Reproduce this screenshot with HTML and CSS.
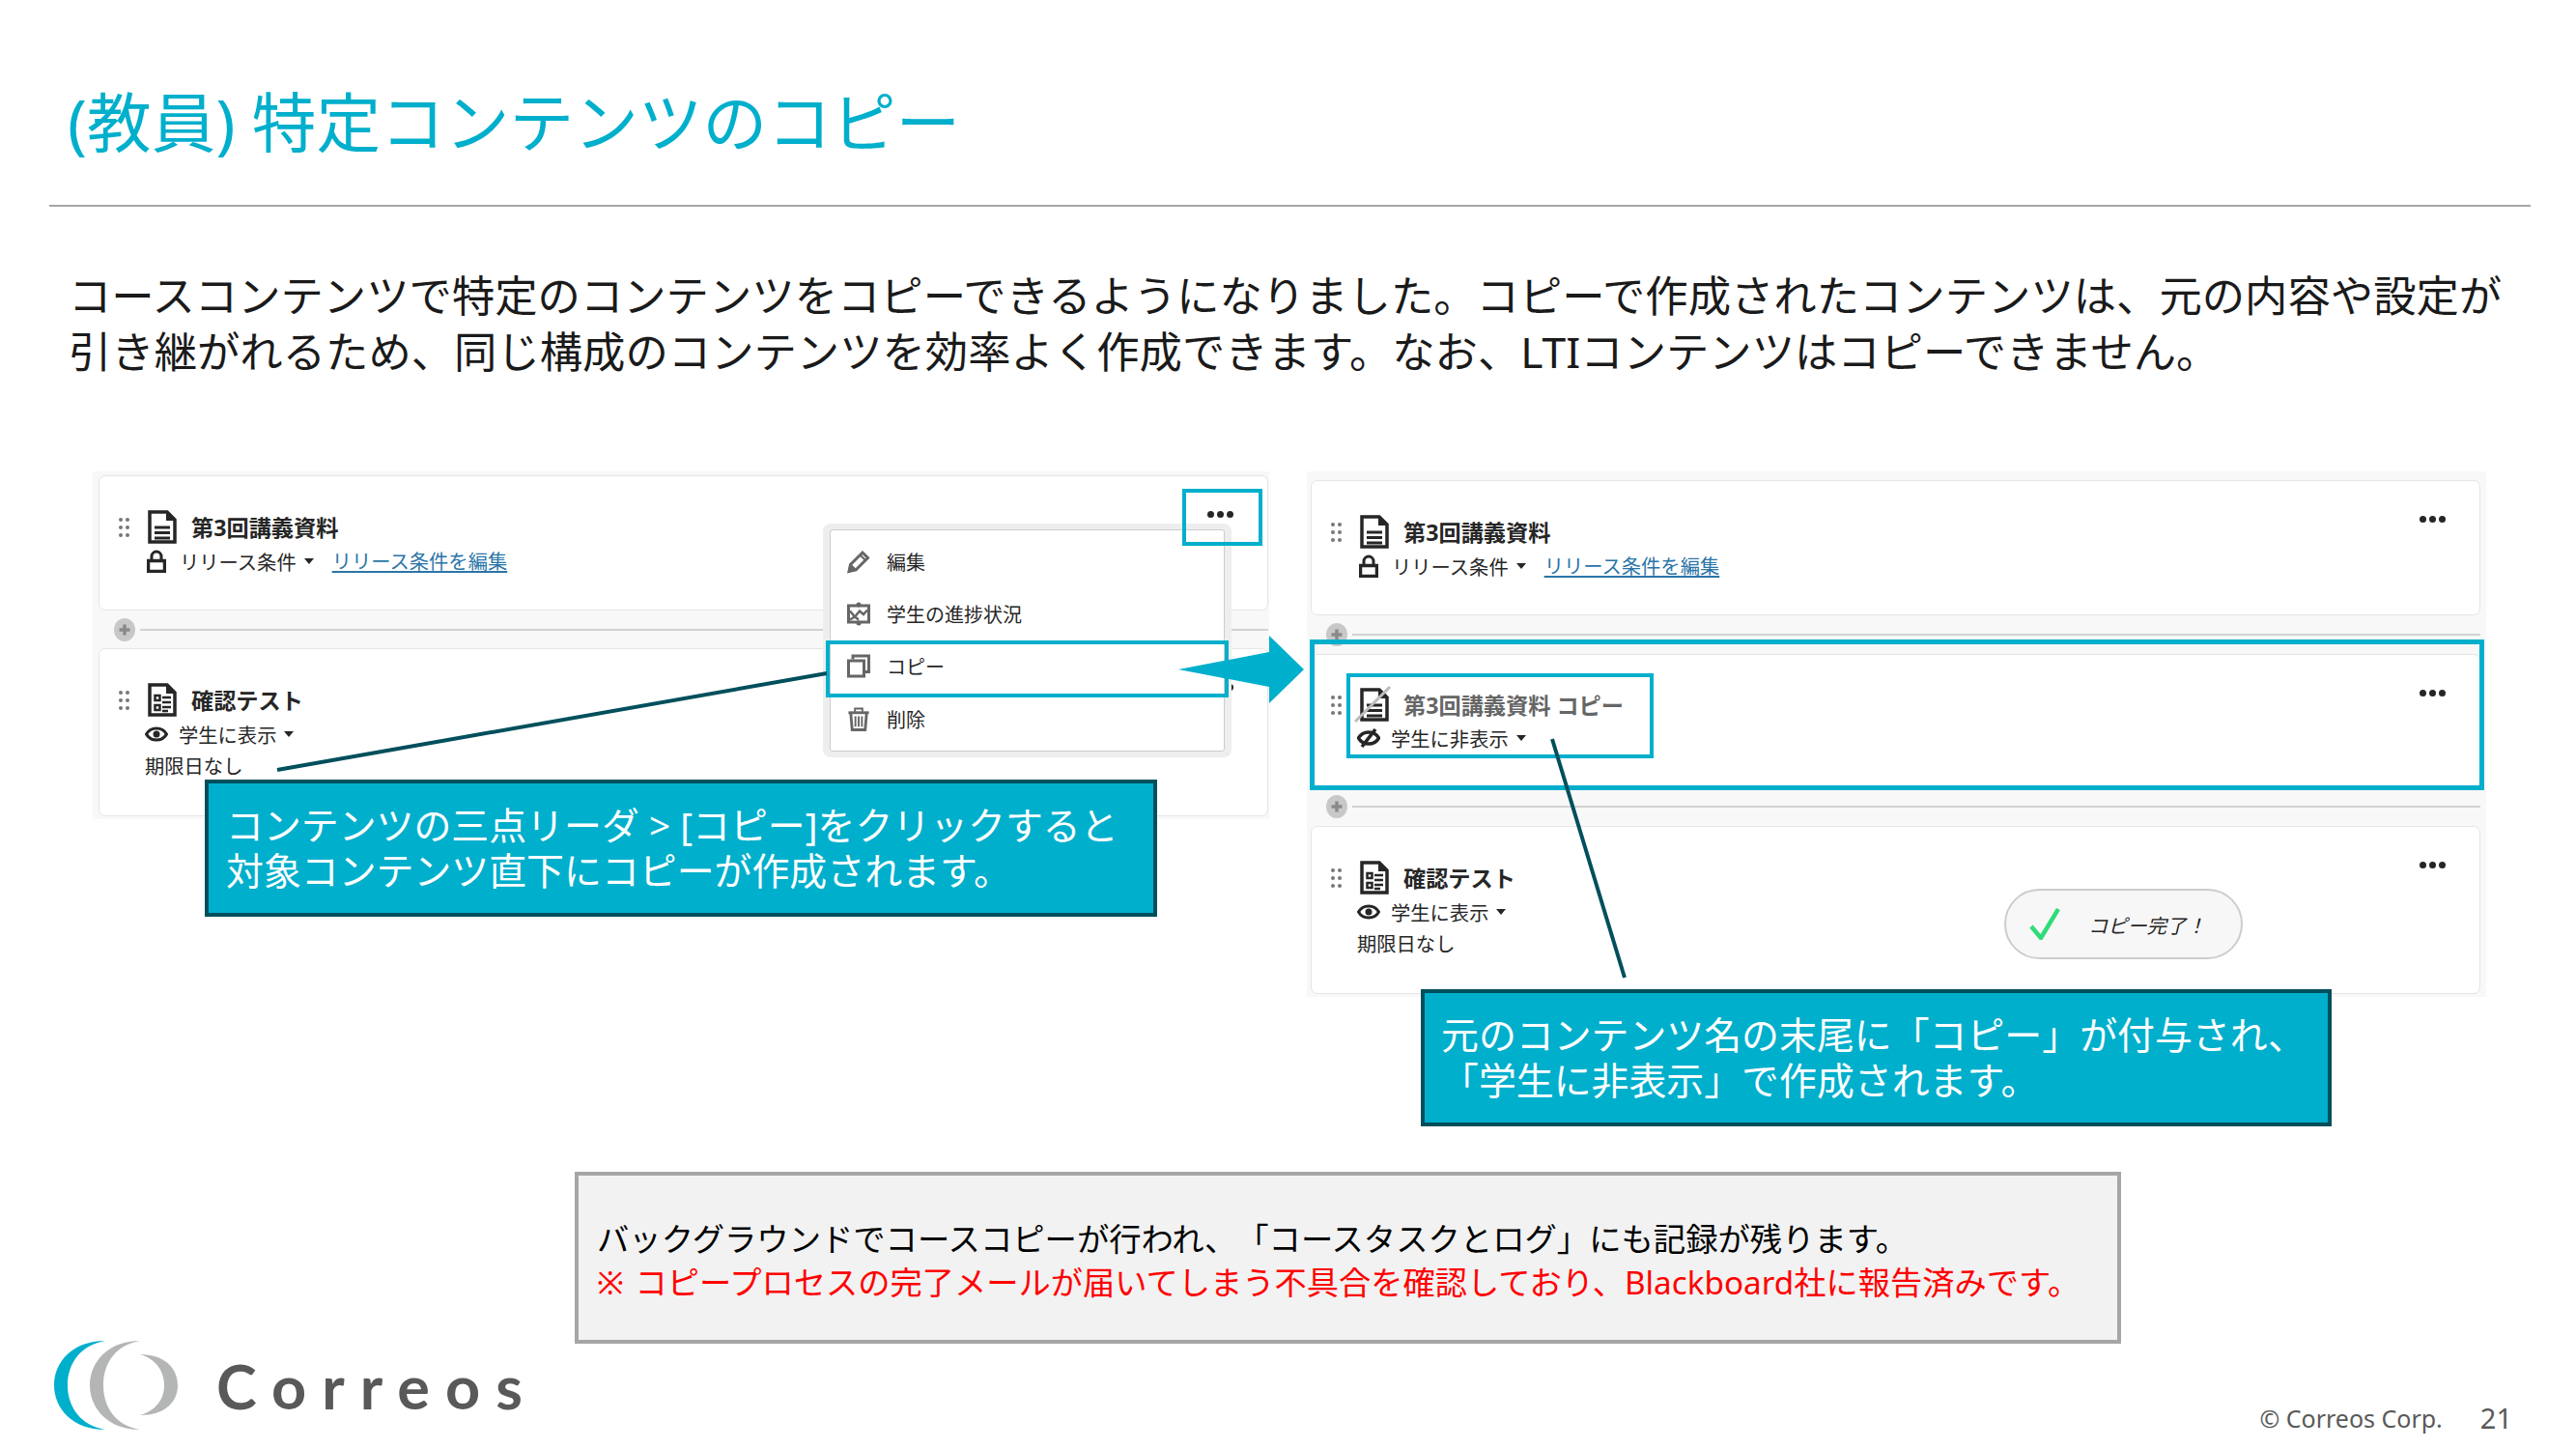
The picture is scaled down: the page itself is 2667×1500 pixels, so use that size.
FILE: index.html
```html
<!DOCTYPE html>
<html lang="ja">
<head>
    <meta charset="UTF-8">
    <title>(教員) 特定コンテンツのコピー</title>
    <link rel="stylesheet" href="styles.css">
</head>
<body>
<svg class="sprite" width="0" height="0">
    <symbol id="i-doc" viewBox="0 0 30 35">
        <path d="M2 2H20L28 10V33H2Z" fill="none" stroke="currentColor" stroke-width="3.500"/>
        <path d="M19 2L28 11H19Z" fill="currentColor"/>
        <path d="M7 18H23M7 23.500H23M7 29H23" stroke="currentColor" stroke-width="3"/>
    </symbol>
    <symbol id="i-test" viewBox="0 0 30 35">
        <path d="M2 2H20L28 10V33H2Z" fill="none" stroke="currentColor" stroke-width="3.500"/>
        <path d="M19 2L28 11H19Z" fill="currentColor"/>
        <path d="M7.500 13h5v5h-5zM7.500 23h5v5h-5z" fill="none" stroke="currentColor" stroke-width="2.500"/>
        <path d="M15 15H24M15 20H24M15 25H24M15 29H21" stroke="currentColor" stroke-width="2.500"/>
    </symbol>
    <symbol id="i-lock" viewBox="0 0 20 24">
        <path d="M1.500 11.500H18.500V22.500H1.500Z" fill="none" stroke="currentColor" stroke-width="3.500"/>
        <path d="M5 11V7A5 5 0 0 1 15 7V11" fill="none" stroke="currentColor" stroke-width="3"/>
    </symbol>
    <symbol id="i-eye" viewBox="0 0 24 20">
        <path d="M1.500 10C6 2 18 2 22.500 10C18 18 6 18 1.500 10Z" fill="none" stroke="currentColor" stroke-width="3"/>
        <circle cx="12" cy="10" r="3.500" fill="currentColor"/>
    </symbol>
    <symbol id="i-eye-off" viewBox="0 0 24 20">
        <path d="M1.500 10C6 2 18 2 22.500 10C18 18 6 18 1.500 10Z" fill="none" stroke="currentColor" stroke-width="3.500"/>
        <path d="M5 19L19 1" stroke="currentColor" stroke-width="3.500"/>
    </symbol>
    <symbol id="i-pencil" viewBox="0 0 24 24">
        <path d="M2 22L3.500 15L16 2.500L21.500 8L9 20.500Z" fill="none" stroke="currentColor" stroke-width="3"/>
        <path d="M13.500 5L19 10.500M2 22L3.500 15L9 20.500Z" fill="currentColor" stroke="currentColor" stroke-width="2"/>
    </symbol>
    <symbol id="i-progress" viewBox="0 0 24 24">
        <path d="M1.500 3.500H22.500V20.500H1.500Z" fill="none" stroke="currentColor" stroke-width="3"/>
        <path d="M3 9L8 15L13 9L17 12.500L21 8M3 18L8 15L12 18" fill="none" stroke="currentColor" stroke-width="2.500"/>
        <circle cx="12" cy="2.500" r="2.500" fill="currentColor"/>
        <circle cx="12" cy="21.500" r="2.500" fill="currentColor"/>
    </symbol>
    <symbol id="i-copy" viewBox="0 0 24 24">
        <path d="M6 5V1.500H22.500V18H18" fill="none" stroke="currentColor" stroke-width="3"/>
        <path d="M1.500 6.500H17.500V22.500H1.500Z" fill="none" stroke="currentColor" stroke-width="3"/>
    </symbol>
    <symbol id="i-trash" viewBox="0 0 24 26">
        <path d="M1 6H23" stroke="currentColor" stroke-width="3"/>
        <path d="M8 5V1.500H16V5" fill="none" stroke="currentColor" stroke-width="2"/>
        <path d="M3.500 7L5 24.500H19L20.500 7" fill="none" stroke="currentColor" stroke-width="3"/>
        <path d="M8.500 10V21M12 10V21M15.500 10V21" stroke="currentColor" stroke-width="2"/>
    </symbol>
    <symbol id="i-plus" viewBox="0 0 22 24">
        <ellipse cx="11" cy="12" rx="11" ry="12" fill="#c8c8c8"/>
        <path d="M11 6.500V17.500M5.500 12H16.500" stroke="#8a8a8a" stroke-width="3.500"/>
    </symbol>
</svg>

<div class="slide">
    <h1 class="slide-title">(教員) 特定コンテンツのコピー</h1>
    <hr class="slide-rule">
    <p class="lead">コースコンテンツで特定のコンテンツをコピーできるようになりました。コピーで作成されたコンテンツは、元の内容や設定が<br>引き継がれるため、同じ構成のコンテンツを効率よく作成できます。なお、LTIコンテンツはコピーできません。</p>

    <div class="figures">
        <!-- 左: コピー前 -->
        <div class="panel panel-before">
            <div class="card card-short">
                <div class="card-head">
                    <span class="grip"><i></i><i></i><i></i><i></i><i></i><i></i></span>
                    <svg class="doc-icon"><use href="#i-doc"/></svg>
                    <span class="card-title">第3回講義資料</span>
                </div>
                <div class="card-meta">
                    <svg class="lock-icon"><use href="#i-lock"/></svg>
                    <span class="meta-text">リリース条件</span><span class="caret"></span>
                    <a class="meta-link" href="#">リリース条件を編集</a>
                </div>
                <span class="kebab"><i></i><i></i><i></i></span>
            </div>
            <div class="sep"><svg class="plus-icon"><use href="#i-plus"/></svg><span class="sep-line"></span></div>
            <div class="card card-tall">
                <div class="card-head">
                    <span class="grip"><i></i><i></i><i></i><i></i><i></i><i></i></span>
                    <svg class="doc-icon"><use href="#i-test"/></svg>
                    <span class="card-title">確認テスト</span>
                </div>
                <div class="card-meta">
                    <svg class="eye-icon"><use href="#i-eye"/></svg>
                    <span class="meta-text">学生に表示</span><span class="caret"></span>
                </div>
                <div class="card-date">期限日なし</div>
                <span class="kebab"><i></i><i></i><i></i></span>
            </div>
        </div>

        <!-- 右: コピー後 -->
        <div class="panel panel-after">
            <div class="card card-short">
                <div class="card-head">
                    <span class="grip"><i></i><i></i><i></i><i></i><i></i><i></i></span>
                    <svg class="doc-icon"><use href="#i-doc"/></svg>
                    <span class="card-title">第3回講義資料</span>
                </div>
                <div class="card-meta">
                    <svg class="lock-icon"><use href="#i-lock"/></svg>
                    <span class="meta-text">リリース条件</span><span class="caret"></span>
                    <a class="meta-link" href="#">リリース条件を編集</a>
                </div>
                <span class="kebab"><i></i><i></i><i></i></span>
            </div>
            <div class="sep sep-after"><svg class="plus-icon"><use href="#i-plus"/></svg><span class="sep-line"></span></div>
            <div class="card card-copy">
                <div class="card-head">
                    <span class="grip"><i></i><i></i><i></i><i></i><i></i><i></i></span>
                    <svg class="doc-icon doc-hidden"><use href="#i-doc"/><path d="M-5 35L31 -1" stroke="#bbb" stroke-width="3"/></svg>
                    <span class="card-title title-hidden">第3回講義資料 コピー</span>
                </div>
                <div class="card-meta">
                    <svg class="eye-icon"><use href="#i-eye-off"/></svg>
                    <span class="meta-text">学生に非表示</span><span class="caret"></span>
                </div>
                <span class="kebab"><i></i><i></i><i></i></span>
            </div>
            <div class="sep sep-after"><svg class="plus-icon"><use href="#i-plus"/></svg><span class="sep-line"></span></div>
            <div class="card card-tall">
                <div class="card-head">
                    <span class="grip"><i></i><i></i><i></i><i></i><i></i><i></i></span>
                    <svg class="doc-icon"><use href="#i-test"/></svg>
                    <span class="card-title">確認テスト</span>
                </div>
                <div class="card-meta">
                    <svg class="eye-icon"><use href="#i-eye"/></svg>
                    <span class="meta-text">学生に表示</span><span class="caret"></span>
                </div>
                <div class="card-date">期限日なし</div>
                <span class="kebab"><i></i><i></i><i></i></span>
                <div class="toast">
                    <svg class="toast-check" viewBox="0 0 32 33"><path d="M2 19L12 31L30 1" fill="none" stroke="#2fdc78" stroke-width="4.500"/></svg>
                    <span class="toast-text">コピー完了！</span>
                </div>
            </div>
        </div>
    </div>

    <!-- スライド上の注釈 -->
    <div class="menu">
        <div class="menu-inner">
            <div class="menu-item"><svg class="menu-icon"><use href="#i-pencil"/></svg>編集</div>
            <div class="menu-item"><svg class="menu-icon"><use href="#i-progress"/></svg>学生の進捗状況</div>
            <div class="menu-item"><svg class="menu-icon"><use href="#i-copy"/></svg>コピー</div>
            <div class="menu-item"><svg class="menu-icon"><use href="#i-trash"/></svg>削除</div>
        </div>
    </div>
    <div class="mark mark-kebab"></div>
    <div class="mark mark-copy"></div>
    <div class="mark mark-card"></div>
    <div class="mark mark-name"></div>
    <svg class="overlay" viewBox="0 0 2667 1500">
        <path d="M287 797L856 697M1607 765L1682 1012" stroke="#004f5c" stroke-width="4"/>
        <path d="M1220 693L1314 675V658L1350 693L1314 728V711Z" fill="#00afcc"/>
    </svg>
    <div class="callout callout-menu">コンテンツの三点リーダ &gt; [コピー]をクリックすると<br>対象コンテンツ直下にコピーが作成されます。</div>
    <div class="callout callout-name">元のコンテンツ名の末尾に「コピー」が付与され、<br>「学生に非表示」で作成されます。</div>

    <div class="note">
        <p>バックグラウンドでコースコピーが行われ、「コースタスクとログ」にも記録が残ります。</p>
        <p class="note-warn">※ コピープロセスの完了メールが届いてしまう不具合を確認しており、Blackboard社に報告済みです。</p>
    </div>

    <div class="footer">
        <svg class="logo-mark" viewBox="0 0 140 92">
            <path d="M59 0C25 0 6 22 6 46C6 70 25 92 59 92C35 88 20 70 20 46C20 22 35 4 59 0Z" fill="#00afcc"/>
            <path d="M95 0C62 0 43 22 43 46C43 70 62 92 95 92C71 88 57 70 57 46C57 22 71 4 95 0Z" fill="#b4b6b5"/>
            <path d="M95 14C120 14 134 28 134 46C134 64 120 77 95 77C112 72 120 60 120 46C120 32 112 19 95 14Z" fill="#b4b6b5"/>
        </svg>
        <span class="logo-text">Correos</span>
        <span class="copyright">© Correos Corp.</span>
        <span class="page-no">21</span>
    </div>
</div>
</body>
</html>
```

FILE: styles.css
```css
* {
    box-sizing: border-box;
}
body {
    margin: 0;
    background: #fff;
    font-family: "Noto Sans", "Noto Sans CJK JP", sans-serif;
    text-spacing-trim: space-all;
}
.sprite {
    position: absolute;
}
.slide {
    position: relative;
    width: 2667px;
    height: 1500px;
    overflow: hidden;
}
.slide-title {
    margin: 0;
    padding: 87px 0 45px 70px;
    font-size: 66.7px;
    line-height: 80px;
    font-weight: 400;
    color: #00afcc;
}
.slide-rule {
    height: 2px;
    margin: 0 47px 0 51px;
    border: 0;
    background: #a6a6a6;
}
.lead {
    margin: 63px 0 0 71px;
    font-size: 44.35px;
    line-height: 58px;
    white-space: nowrap;
    color: #1a1a1a;
}

/* screenshots */
.figures {
    display: flex;
    gap: 39px;
    margin: 95px 0 0 96px;
}
.panel {
    background: #f8f8f8;
    color: #262626;
}
.panel-before {
    width: 1218px;
    height: 360px;
    padding: 4px 1px 3px 6px;
}
.panel-after {
    width: 1221px;
    height: 544px;
    padding: 9px 6px 3px 4px;
}
.card {
    position: relative;
    padding: 35px 0 0 20px;
    background: #fff;
    border: 1px solid #e5e5e5;
    border-radius: 7px;
}
.card-short {
    height: 140px;
}
.card-copy {
    height: 138px;
    padding-top: 34px;
}
.card-copy .card-meta {
    margin-top: 5px;
}
.card-tall {
    height: 174px;
}
.card-head {
    display: flex;
    align-items: center;
    height: 35px;
}
.grip {
    display: grid;
    grid-template-columns: 4px 4px;
    gap: 4px 3px;
    width: 11px;
    margin-right: 19px;
}
.grip i {
    width: 4px;
    height: 4px;
    border-radius: 50%;
    background: #777;
}
.doc-icon {
    width: 30px;
    height: 35px;
    margin-right: 15px;
    overflow: visible;
}
.card-title {
    padding-bottom: 2px;
    font-size: 23.2px;
    font-weight: 700;
    white-space: nowrap;
}
.title-hidden {
    color: #666;
}
.card-meta {
    display: flex;
    align-items: center;
    height: 24px;
    margin: 6px 0 0 28px;
    font-size: 20.3px;
    white-space: nowrap;
}
.lock-icon {
    width: 20px;
    height: 24px;
    margin: 0 14px 0 1px;
}
.eye-icon {
    width: 24px;
    height: 20px;
    margin: 0 11px 0 -1px;
}
.caret {
    width: 0;
    height: 0;
    margin-left: 8px;
    border: 5px solid transparent;
    border-top: 6px solid #262626;
    border-bottom: 0;
}
.meta-link {
    margin-left: 19px;
    color: #2a75a8;
    line-height: 22px;
    text-decoration: underline;
}
.card-date {
    margin: 9px 0 0 27px;
    font-size: 20.3px;
    line-height: 24px;
}
.kebab {
    position: absolute;
    top: 36px;
    right: 35px;
    display: flex;
    gap: 3px;
}
.kebab i {
    width: 7px;
    height: 7px;
    border-radius: 50%;
    background: #262626;
}
.sep {
    display: flex;
    align-items: center;
    height: 39px;
    padding-left: 16px;
}
.sep-after {
    height: 40px;
    padding-left: 16px;
}
.plus-icon {
    flex: none;
    width: 22px;
    height: 24px;
}
.sep-line {
    flex: 1;
    height: 2px;
    margin-left: 5px;
    background: #d2d2d2;
}
.toast {
    position: absolute;
    top: 64px;
    left: 717px;
    display: flex;
    align-items: center;
    width: 247px;
    height: 73px;
    padding-left: 24px;
    background: #f7f7f7;
    border: 2px solid #cdcdcd;
    border-radius: 37px;
}
.toast-check {
    width: 32px;
    height: 33px;
    margin-right: 29px;
}
.toast-text {
    font-size: 20.3px;
    font-style: italic;
}

/* things laid over the screenshots */
.menu {
    position: absolute;
    top: 542px;
    left: 852px;
    width: 423px;
    height: 242px;
    padding: 6px 7px;
    background: #eee;
    border-radius: 8px;
}
.menu-inner {
    height: 100%;
    padding-top: 5px;
    background: #fff;
    border: 1px solid #ccc;
    border-radius: 3px;
}
.menu-item {
    display: flex;
    align-items: center;
    height: 54.4px;
    padding-left: 17px;
    font-size: 20px;
    color: #262626;
}
.menu-icon {
    width: 24px;
    height: 25px;
    margin-right: 17px;
    color: #666;
}
.mark {
    position: absolute;
    border: 4px solid #00afcc;
}
.mark-kebab {
    top: 506px;
    left: 1224px;
    width: 83px;
    height: 59px;
}
.mark-copy {
    top: 663px;
    left: 855px;
    width: 417px;
    height: 59px;
}
.mark-card {
    top: 662px;
    left: 1356px;
    width: 1216px;
    height: 156px;
    border-width: 5px;
}
.mark-name {
    top: 697px;
    left: 1394px;
    width: 318px;
    height: 88px;
}
.overlay {
    position: absolute;
    top: 0;
    left: 0;
    width: 2667px;
    height: 1500px;
}
.callout {
    position: absolute;
    display: flex;
    align-items: center;
    height: 142px;
    padding-bottom: 2px;
    background: #00afcc;
    border: 4px solid #004f5c;
    font-size: 38.9px;
    line-height: 47px;
    color: #fff;
    white-space: nowrap;
}
.callout-menu {
    top: 807px;
    left: 212px;
    width: 986px;
    padding-left: 18px;
}
.callout-name {
    top: 1024px;
    left: 1471px;
    width: 943px;
    padding-left: 17px;
}

.note {
    display: flex;
    flex-direction: column;
    justify-content: center;
    width: 1601px;
    height: 178px;
    margin: 181px 0 0 595px;
    padding: 6px 0 0 19px;
    background: #f2f2f2;
    border: 4px solid #a6a6a6;
    font-size: 33.35px;
    line-height: 45px;
    color: #000;
    white-space: nowrap;
}
.note p {
    margin: 0;
}
.note-warn {
    color: #f00;
    font-size: 33.25px;
    word-spacing: 3px;
}

.footer {
    display: flex;
    height: 112px;
    margin-top: -3px;
    padding-left: 50px;
    color: #595959;
}
.logo-mark {
    width: 140px;
    height: 92px;
}
.logo-text {
    margin-left: 34px;
    font-family: "Lato", sans-serif;
    font-size: 63px;
    font-weight: 700;
    line-height: 94px;
    letter-spacing: 16px;
}
.copyright {
    align-self: flex-end;
    margin-left: auto;
    padding-bottom: 14px;
    font-size: 25px;
    line-height: 36px;
}
.page-no {
    align-self: flex-end;
    margin: 0 66px 0 39px;
    padding-bottom: 12px;
    font-size: 29px;
    line-height: 40px;
}
```
